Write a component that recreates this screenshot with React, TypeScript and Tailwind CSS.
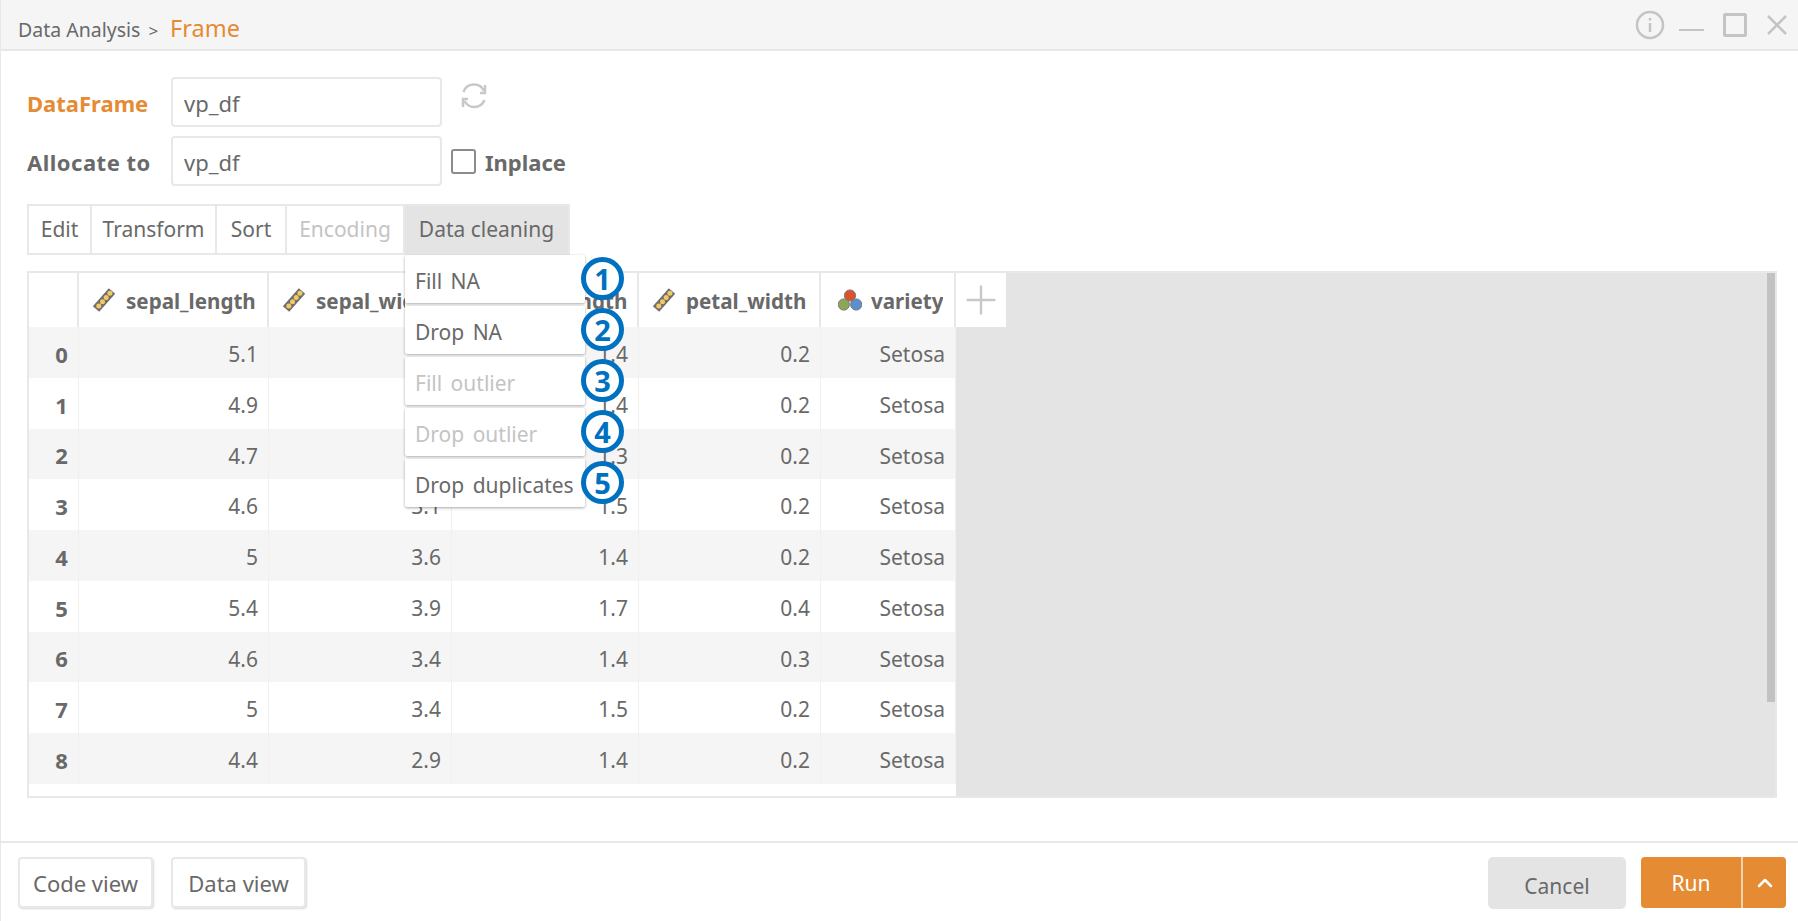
import { ChevronUp, Plus } from "lucide-react"

const font = "font-['Noto_Sans','Noto_Sans_CJK_KR',sans-serif]"

const columns = [
  { name: "sepal_length", width: "w-[190px]", icon: "ruler" },
  { name: "sepal_width", width: "w-[183px]", icon: "ruler" },
  { name: "petal_length", width: "w-[187px]", icon: "ruler" },
  { name: "petal_width", width: "w-[182px]", icon: "ruler" },
  { name: "variety", width: "w-[135px]", icon: "dots" },
]

const rows = [
  ["5.1", "3.5", "1.4", "0.2", "Setosa"],
  ["4.9", "3", "1.4", "0.2", "Setosa"],
  ["4.7", "3.2", "1.3", "0.2", "Setosa"],
  ["4.6", "3.1", "1.5", "0.2", "Setosa"],
  ["5", "3.6", "1.4", "0.2", "Setosa"],
  ["5.4", "3.9", "1.7", "0.4", "Setosa"],
  ["4.6", "3.4", "1.4", "0.3", "Setosa"],
  ["5", "3.4", "1.5", "0.2", "Setosa"],
  ["4.4", "2.9", "1.4", "0.2", "Setosa"],
]

const tabs = [
  { label: "Edit", width: "w-[61px]" },
  { label: "Transform", width: "w-[123px]" },
  { label: "Sort", width: "w-[68px]" },
  { label: "Encoding", width: "w-[116px]", disabled: true },
  { label: "Data cleaning", width: "w-[163px]", active: true },
]

const menu = [
  { label: "Fill NA", num: 1 },
  { label: "Drop NA", num: 2 },
  { label: "Fill outlier", num: 3, disabled: true },
  { label: "Drop outlier", num: 4, disabled: true },
  { label: "Drop duplicates", num: 5 },
]

function RulerIcon() {
  return (
    <svg width="24" height="26" viewBox="0 0 24 26" className="shrink-0">
      <path d="M4 22 L20 4" stroke="#6f6f6f" strokeWidth="8.5" strokeLinecap="butt" />
      <circle cx="6.8" cy="18.9" r="2.5" fill="#f4c863" />
      <circle cx="10.5" cy="14.7" r="2.5" fill="#f4c863" />
      <circle cx="14.2" cy="10.5" r="2.5" fill="#f4c863" />
      <circle cx="17.9" cy="6.3" r="2.5" fill="#f4c863" />
    </svg>
  )
}

function DotsIcon() {
  return (
    <svg width="24" height="22" viewBox="0 0 24 22" className="shrink-0">
      <circle cx="12" cy="6.5" r="5.6" fill="#d9532b" stroke="#777777" strokeWidth="1" />
      <circle cx="5.8" cy="15.5" r="5.6" fill="#8ca856" stroke="#777777" strokeWidth="1" />
      <circle cx="18.2" cy="15.5" r="5.6" fill="#5b8fd0" stroke="#777777" strokeWidth="1" />
    </svg>
  )
}

function RefreshIcon() {
  return (
    <svg width="30" height="30" viewBox="0 0 30 30" fill="none" stroke="#c8c8c8" strokeWidth="2.5">
      <path d="M4.5 11 A11 11 0 0 1 25 10" />
      <path d="M25.5 19 A11 11 0 0 1 5.5 20" />
      <path d="M26 4 V12 H21" />
      <path d="M4 26 V18 H9" />
    </svg>
  )
}

export default function App() {
  return (
    <div className={`flex h-[921px] w-[1798px] flex-col overflow-hidden border-l border-[#e8e8e8] bg-white text-[#696969] ${font}`}>

      {/* Title bar */}
      <div className="flex h-[51px] shrink-0 items-center justify-between border-b-2 border-[#e8e8e8] bg-[#f5f5f5] pl-[17px] pr-[10px]">
        <div className="flex items-baseline pt-[9px] text-[19.5px]">
          <span>Data Analysis</span>
          <span className="ml-[8px] text-[17px]">&gt;</span>
          <span className="ml-[12px] text-[23.5px] text-[#e58b34]">Frame</span>
        </div>
        <div className="flex items-center text-[#c4c4c4]">
          <svg width="30" height="30" viewBox="0 0 30 30" fill="none" stroke="#c4c4c4" strokeWidth="2.5">
            <circle cx="15" cy="15" r="13" />
            <path d="M15 13 V22" />
            <path d="M15 8 V10.5" />
          </svg>
          <div className="ml-[14px] mt-[11px] h-[2px] w-[25px] bg-[#c4c4c4]" />
          <div className="ml-[19px] h-[24px] w-[24px] rounded-[2px] border-[3px] border-[#c4c4c4]" />
          <svg width="22" height="22" viewBox="0 0 22 22" stroke="#c4c4c4" strokeWidth="2.5" className="ml-[19px]">
            <path d="M2 2 L20 20 M20 2 L2 20" />
          </svg>
        </div>
      </div>

      {/* Form + table */}
      <div className="flex min-h-0 flex-1 flex-col pl-[26px] pr-[21px] pt-[26px]">
        <div className="flex h-[50px] items-center">
          <label className="w-[144px] pt-[2px] text-[22px] font-bold text-[#e58b34]">DataFrame</label>
          <input readOnly value="vp_df" className="h-[50px] w-[271px] rounded-[4px] border-2 border-[#e8e8e8] px-[11px] pt-[2px] text-[22px] text-[#696969] outline-none" />
          <div className="mb-[12px] ml-[17px]"><RefreshIcon /></div>
        </div>
        <div className="mt-[9px] flex h-[50px] items-center">
          <label className="w-[144px] pt-[2px] text-[22px] font-bold tracking-[0.5px]">Allocate to</label>
          <input readOnly value="vp_df" className="h-[50px] w-[271px] rounded-[4px] border-2 border-[#e8e8e8] px-[11px] pt-[2px] text-[22px] text-[#696969] outline-none" />
          <div className="ml-[9px] h-[25px] w-[25px] rounded-[3px] border-2 border-[#8c8c8c]" />
          <span className="ml-[9px] pt-[2px] text-[22px] font-bold">Inplace</span>
        </div>

        {/* Tabs */}
        <div className="relative mt-[18px] flex h-[51px] w-[543px] gap-[2px] border-2 border-[#e8e8e8] bg-[#e8e8e8] text-[21px]">
          {tabs.map((tab) => (
            <div
              key={tab.label}
              className={`flex h-full items-center justify-center ${tab.width} ${tab.disabled ? "text-[#c4c4c4]" : ""} ${tab.active ? "bg-[#e4e4e4]" : "bg-white"}`}
            >
              {tab.label}
            </div>
          ))}

          {/* Data cleaning menu */}
          <div className="absolute left-[376px] top-[49px] z-10 flex flex-col gap-[3px] bg-white">
            {menu.map((item) => (
              <div
                key={item.label}
                className={`relative flex h-[48px] w-[180px] items-center rounded-[2px] bg-white pl-[10px] pt-[5px] text-[21px] [word-spacing:3px] shadow-[0_1px_3px_rgba(0,0,0,0.35)] ${item.disabled ? "text-[#c4c4c4]" : ""}`}
              >
                {item.label}
                <div className="absolute left-[176px] top-[2px] flex h-[43px] w-[43px] items-center justify-center rounded-full border-[5px] border-[#0070c0] bg-white text-[29px] font-bold leading-none text-[#0070c0]">
                  {item.num}
                </div>
              </div>
            ))}
          </div>
        </div>

        {/* Table */}
        <div className="relative mt-[16px] flex h-[527px] flex-col border-2 border-[#e8e8e8] bg-[#e4e4e4]">
          <div className="flex h-[54px] shrink-0">
            <div className="w-[50px] shrink-0 border-r-2 border-[#e8e8e8] bg-white" />
            {columns.map((col) => (
              <div
                key={col.name}
                className={`flex shrink-0 items-center border-r-2 border-[#e8e8e8] bg-white text-[20.6px] font-bold ${col.width} ${col.icon === "ruler" ? "gap-[10px] pl-[13px]" : "gap-[9px] pl-[17px]"}`}
              >
                {col.icon === "ruler" ? <RulerIcon /> : <DotsIcon />}
                <span className="truncate pt-[2px]">{col.name}</span>
              </div>
            ))}
            <div className="flex w-[50px] shrink-0 items-center justify-center bg-white">
              <Plus size={46} strokeWidth={1.3} color="#c8c8c8" />
            </div>
          </div>

          <div className="flex w-[927px] flex-1 flex-col bg-white">
            {rows.map((row, i) => (
              <div key={i} className={`flex h-[50.75px] shrink-0 text-[21px] ${i % 2 === 0 ? "bg-[#f5f5f5]" : "bg-white"}`}>
                <div className="flex w-[50px] shrink-0 items-center justify-center border-r border-[#f0f0f0] pl-[16px] pt-[4px] text-[22px] font-bold">{i}</div>
                {row.map((value, j) => (
                  <div key={j} className={`flex shrink-0 items-center justify-end border-r border-[#f0f0f0] pr-[10px] pt-[5px] ${columns[j].width}`}>
                    {value}
                  </div>
                ))}
              </div>
            ))}
          </div>

          <div className="absolute bottom-[94px] right-0 top-0 w-[8px] bg-[#c2c2c2]" />
        </div>
      </div>

      {/* Footer */}
      <div className="flex h-[80px] shrink-0 items-center justify-between border-t-2 border-[#e8e8e8] pl-[17px] pr-[12px] pt-[1px]">
        <div className="flex gap-[18px]">
          <button className="h-[51px] w-[135px] rounded-[4px] border-2 border-[#e8e8e8] bg-white pt-[2px] text-[22px] shadow-[1px_1px_2px_rgba(0,0,0,0.15)]">Code view</button>
          <button className="h-[51px] w-[135px] rounded-[4px] border-2 border-[#e8e8e8] bg-white pt-[2px] text-[22px] shadow-[1px_1px_2px_rgba(0,0,0,0.15)]">Data view</button>
        </div>
        <div className="flex items-center">
          <button className="h-[52px] w-[138px] rounded-[5px] bg-[#e4e4e4] pt-[8px] text-[21px]">Cancel</button>
          <div className="ml-[15px] flex h-[51px] overflow-hidden rounded-[4px] bg-[#e58b34] text-white">
            <button className="w-[102px] border-r-2 border-[#f3d3b0] pt-[2px] text-[21px]">Run</button>
            <button className="flex w-[43px] items-center justify-center"><ChevronUp size={24} strokeWidth={2.5} /></button>
          </div>
        </div>
      </div>
    </div>
  )
}
